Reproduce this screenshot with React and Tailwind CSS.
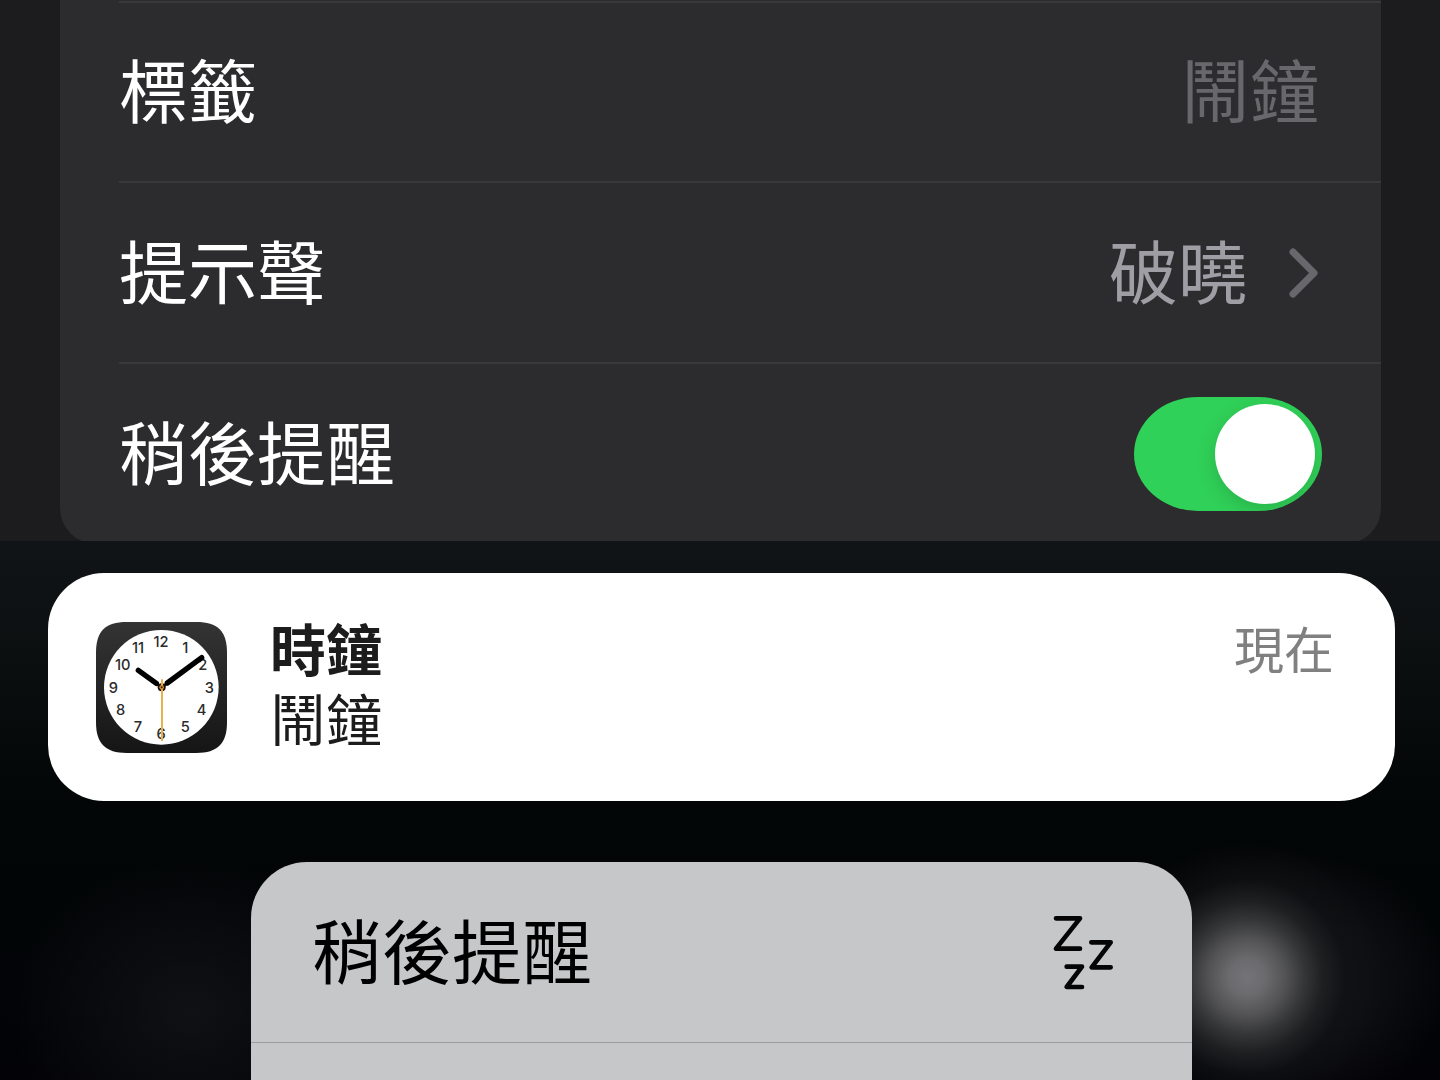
import { useState } from "react";

const CLOCK_NUMBERS = [
  { label: "12", x: 195, y: 59 },
  { label: "1", x: 268, y: 78 },
  { label: "2", x: 320, y: 130 },
  { label: "3", x: 340, y: 197 },
  { label: "4", x: 317, y: 265 },
  { label: "5", x: 268, y: 316 },
  { label: "6", x: 195, y: 335 },
  { label: "7", x: 126, y: 316 },
  { label: "8", x: 74, y: 265 },
  { label: "9", x: 52, y: 197 },
  { label: "10", x: 80, y: 130 },
  { label: "11", x: 126, y: 78 },
];

function ClockIcon() {
  return (
    <svg viewBox="0 0 393 393" className="size-[131px] shrink-0" aria-hidden="true">
      <defs>
        <linearGradient id="clock-case" x1="0" y1="0" x2="0" y2="1">
          <stop offset="0" stopColor="#343435" />
          <stop offset="1" stopColor="#151516" />
        </linearGradient>
      </defs>
      <path
        d="M92 0H301C365 0 393 28 393 92V301C393 365 365 393 301 393H92C28 393 0 365 0 301V92C0 28 28 0 92 0Z"
        fill="url(#clock-case)"
      />
      <circle cx="196" cy="196" r="172" fill="#fff" />
      {CLOCK_NUMBERS.map((n) => (
        <text
          key={n.label}
          x={n.x}
          y={n.y + 15}
          textAnchor="middle"
          className="fill-[#2b2b2b] font-['Inter',sans-serif] text-[44px] font-medium"
        >
          {n.label}
        </text>
      ))}
      {/* Hour and minute hands */}
      <g stroke="#000" strokeLinecap="round">
        <path d="M197 196L127 145M197 196L317 107" strokeWidth="8" />
        <path d="M181 184L127 145M214 183L317 107" strokeWidth="16" />
      </g>
      {/* Second hand */}
      <circle cx="197" cy="196" r="12" fill="#111" />
      <path d="M198 172V357" stroke="#ecb04a" strokeWidth="6" />
      <circle cx="197" cy="196" r="7" fill="#e08a1e" />
      <circle cx="197" cy="196" r="3" fill="#222" />
    </svg>
  );
}

function ChevronIcon() {
  return (
    <svg viewBox="0 0 30 50" className="h-[50px] w-[30px]" fill="none" aria-hidden="true">
      <path
        d="M4 4L25 25L4 46"
        stroke="#68686c"
        strokeWidth="7"
        strokeLinecap="round"
        strokeLinejoin="round"
      />
    </svg>
  );
}

function SnoozeIcon() {
  return (
    <svg viewBox="0 0 183 228" className="h-[76px] w-[61px]" fill="none" aria-hidden="true">
      <g stroke="#050505" strokeWidth="14" strokeLinecap="round" strokeLinejoin="round">
        <path d="M12 13H84L12 104H84" />
        <path d="M118 85H176L119 160H176" />
        <path d="M44 158H90L44 219H90" />
      </g>
    </svg>
  );
}

function AlarmSettings() {
  const [label, setLabel] = useState("");
  const [snooze, setSnooze] = useState(true);

  return (
    <section className="overflow-hidden bg-[#1c1c1e] pr-[59px] pl-[60px] text-[69px] leading-[104px] text-white">
      <div className="-mb-[3px] rounded-b-[36px] bg-[#2c2c2e] pt-px pl-[59px]">
        <div className="flex h-[180px] items-center justify-between border-t-2 border-[#39393c] pr-[62px]">
          <label htmlFor="alarm-label" className="shrink-0 pt-1.5">
            標籤
          </label>
          <input
            id="alarm-label"
            type="text"
            value={label}
            onChange={(e) => setLabel(e.target.value)}
            placeholder="鬧鐘"
            className="min-w-0 flex-1 bg-transparent pt-1.5 text-right outline-none placeholder:text-[#68686c]"
          />
        </div>

        <button
          type="button"
          className="flex h-[181px] w-full cursor-pointer items-center justify-between border-t-2 border-[#39393c] pr-[62px] text-left"
        >
          <span className="pt-1.5">提示聲</span>
          <span className="flex items-center gap-[42px] text-[#9f9ea5]">
            <span className="pt-1.5">破曉</span>
            <ChevronIcon />
          </span>
        </button>

        <div className="flex h-[182px] items-center justify-between border-t-2 border-[#39393c] pr-[59px]">
          <label htmlFor="alarm-snooze" className="pt-1.5">
            稍後提醒
          </label>
          <input
            id="alarm-snooze"
            type="checkbox"
            role="switch"
            checked={snooze}
            onChange={(e) => setSnooze(e.target.checked)}
            className="flex h-[114px] w-[188px] cursor-pointer appearance-none items-center overflow-hidden rounded-[64px/57px] bg-[#39393d] px-[7px] before:size-[100px] before:rounded-full before:bg-white before:shadow-[0_6px_20px_rgba(0,0,0,0.15)] checked:justify-end checked:bg-[#30d158]"
          />
        </div>
      </div>
    </section>
  );
}

function AlarmNotification() {
  return (
    <article className="mr-[45px] ml-12 flex h-[228px] items-center rounded-[56px] bg-white pr-[61px] pl-12 text-[#1c1c1c]">
      <ClockIcon />
      <div className="ml-[43px] flex-1 text-[56px] leading-[70px]">
        <h2 className="font-bold">時鐘</h2>
        <p>鬧鐘</p>
      </div>
      <time className="self-start pt-11 text-[50px] leading-[70px] text-[#808080]">現在</time>
    </article>
  );
}

function AlarmMenu() {
  return (
    <div className="mt-[61px] mr-[248px] ml-[251px] flex flex-1 flex-col rounded-t-[56px] bg-[#c6c7c9] text-black">
      <button
        type="button"
        className="flex h-[181px] w-full cursor-pointer items-center justify-between border-b border-[#9b9c9e] pr-[79px] pl-[61px] text-left text-[70px] leading-[104px]"
      >
        <span className="pt-1.5">稍後提醒</span>
        <SnoozeIcon />
      </button>
    </div>
  );
}

function App() {
  return (
    <main className="flex min-h-screen flex-col bg-black font-['Liberation_Sans','Noto_Sans_CJK_TC',sans-serif]">
      <AlarmSettings />
      {/* Blurred lock screen behind the notification */}
      <section className="flex flex-1 flex-col bg-[radial-gradient(circle_at_1247px_436px,#747377_0px,#6b6b6e_18px,#535356_38px,#353638_57px,#1e1f21_76px,#101113aa_98px,transparent_135px),radial-gradient(ellipse_180px_150px_at_190px_470px,#101115,transparent),radial-gradient(ellipse_160px_130px_at_1290px_440px,#1a1a1f,transparent),linear-gradient(to_bottom,#101416_0px,#0c1011_100px,#030607_260px,#020506_400px,#020207_539px)] pt-8">
        <AlarmNotification />
        <AlarmMenu />
      </section>
    </main>
  );
}

export default App;
